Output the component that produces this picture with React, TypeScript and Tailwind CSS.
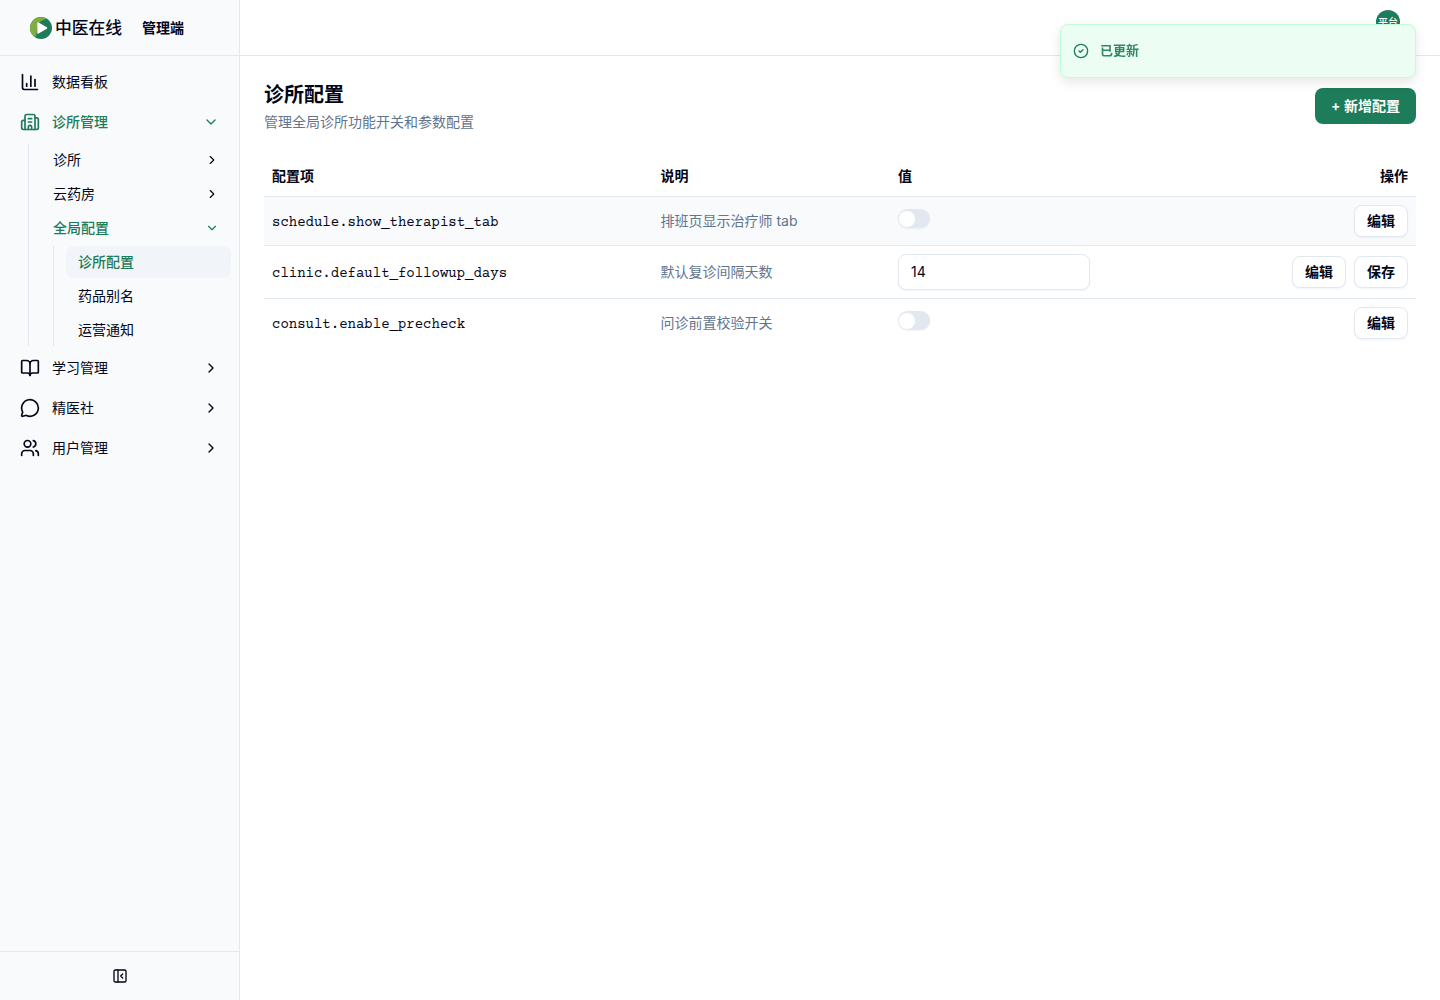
import {
  BookOpen,
  Building2,
  ChartColumn,
  ChevronDown,
  ChevronRight,
  CircleCheck,
  MessageCircle,
  PanelLeftClose,
  Users,
  type LucideIcon,
} from "lucide-react";
import clsx from "clsx";
import { useState } from "react";

interface NavItem {
  label: string;
  icon?: LucideIcon;
  open?: boolean;
  active?: boolean;
  expandable?: boolean;
  children?: NavItem[];
}

const NAV: NavItem[] = [
  { label: "数据看板", icon: ChartColumn },
  {
    label: "诊所管理",
    icon: Building2,
    open: true,
    expandable: true,
    children: [
      { label: "诊所", expandable: true },
      { label: "云药房", expandable: true },
      {
        label: "全局配置",
        open: true,
        expandable: true,
        children: [
          { label: "诊所配置", active: true },
          { label: "药品别名" },
          { label: "运营通知" },
        ],
      },
    ],
  },
  { label: "学习管理", icon: BookOpen, expandable: true },
  { label: "精医社", icon: MessageCircle, expandable: true },
  { label: "用户管理", icon: Users, expandable: true },
];

interface ConfigRow {
  key: string;
  desc: string;
  type: "boolean" | "number";
  value: string;
}

const ROWS: ConfigRow[] = [
  { key: "schedule.show_therapist_tab", desc: "排班页显示治疗师 tab", type: "boolean", value: "false" },
  { key: "clinic.default_followup_days", desc: "默认复诊间隔天数", type: "number", value: "14" },
  { key: "consult.enable_precheck", desc: "问诊前置校验开关", type: "boolean", value: "false" },
];

const Logo = () => (
  <svg viewBox="0 0 24 24" className="size-6 shrink-0">
    <circle cx="12" cy="12" r="11" fill="#1d7c5a" />
    <path d="M12 1A11 11 0 0 0 5.2 20.6C8.5 21.5 7 15 9 9C10.5 4.5 15 4 17.5 2.5A11 11 0 0 0 12 1Z" fill="#80ad43" />
    <path d="M8.3 7.2Q8.3 5.8 9.6 6.4L17.8 11.2Q18.8 12 17.8 12.8L9.6 17.6Q8.3 18.2 8.3 16.8Z" fill="#fff" />
  </svg>
);

const NavNode = ({ item, depth }: { item: NavItem; depth: number }) => {
  const Icon = item.icon;
  const Chevron = item.open ? ChevronDown : ChevronRight;

  return (
    <li>
      <button
        className={clsx(
          "flex w-full items-center rounded-lg px-3 text-left text-sm",
          depth === 0 ? "h-9 gap-3" : "h-8",
          item.active && "bg-slate-100",
          item.open || item.active ? "font-medium text-[#1d7c5a]" : "font-normal"
        )}
      >
        {Icon && <Icon className="size-5 shrink-0" />}
        <span className="flex-1 whitespace-nowrap">{item.label}</span>
        {item.expandable && <Chevron className={depth === 0 ? "size-4" : "size-3.5"} />}
      </button>
      {item.children && (
        <ul
          className={clsx(
            "flex flex-col gap-0.5 border-l border-slate-200 pl-3",
            depth === 0 ? "mt-1 ml-5" : "mt-0.5 ml-3"
          )}
        >
          {item.children.map((child) => (
            <NavNode key={child.label} item={child} depth={depth + 1} />
          ))}
        </ul>
      )}
    </li>
  );
};

const Sidebar = () => (
  <aside className="flex w-60 shrink-0 flex-col border-r border-slate-200 bg-slate-50">
    <div className="flex h-14 shrink-0 items-center border-b border-slate-200 pl-[29px]">
      <Logo />
      <span className="ml-0.5 w-[68px] pt-0.5 text-[16.8px] font-medium whitespace-nowrap">中医在线</span>
      <span className="ml-[19px] text-sm font-semibold">管理端</span>
    </div>
    <nav className="flex-1 p-2">
      <ul className="flex flex-col gap-1">
        {NAV.map((item) => (
          <NavNode key={item.label} item={item} depth={0} />
        ))}
      </ul>
    </nav>
    <div className="flex h-[49px] items-center justify-center border-t border-slate-200">
      <PanelLeftClose className="size-4" />
    </div>
  </aside>
);

const Switch = () => {
  const [on, setOn] = useState(false);

  return (
    <button
      role="switch"
      aria-checked={on}
      onClick={() => setOn(!on)}
      className={clsx(
        "inline-flex h-[18.4px] w-8 items-center rounded-full border border-transparent shadow-xs",
        on ? "bg-[#1d7c5a]" : "bg-slate-200"
      )}
    >
      <span className={clsx("block size-4 rounded-full bg-white", on && "translate-x-3.5")} />
    </button>
  );
};

const OutlineButton = ({ children }: { children: string }) => (
  <button className="h-8 rounded-lg border border-slate-200 bg-white px-3 text-sm font-semibold shadow-xs">
    {children}
  </button>
);

const ConfigTable = () => (
  <table className="mt-6 w-full table-fixed text-sm">
    <colgroup>
      <col className="w-[388.5px]" />
      <col className="w-[237.5px]" />
      <col className="w-[300px]" />
      <col />
    </colgroup>
    <thead>
      <tr className="border-b border-slate-200">
        <th className="h-10 px-2 text-left font-semibold">配置项</th>
        <th className="h-10 px-2 text-left font-semibold">说明</th>
        <th className="h-10 px-2 text-left font-semibold">值</th>
        <th className="h-10 px-2 text-right font-semibold">操作</th>
      </tr>
    </thead>
    <tbody>
      {ROWS.map((row, i) => (
        <tr key={row.key} className={clsx("border-slate-200 not-last:border-b", i === 0 && "bg-slate-50")}>
          <td className="px-2 pt-3 pb-2 font-['Courier_Prime','Courier_10_Pitch','Nimbus_Mono_PS','FreeMono','Courier','Liberation_Mono',monospace]">
            <span className="block leading-4">{row.key}</span>
          </td>
          <td className="p-2 text-slate-500">{row.desc}</td>
          <td className="p-2">
            {row.type === "boolean" ? (
              <Switch />
            ) : (
              <input
                defaultValue={row.value}
                className="block h-9 w-48 rounded-lg border border-slate-200 bg-white px-3 text-sm shadow-xs outline-none"
              />
            )}
          </td>
          <td className="p-2">
            <div className="flex justify-end gap-2">
              <OutlineButton>编辑</OutlineButton>
              {row.type === "number" && <OutlineButton>保存</OutlineButton>}
            </div>
          </td>
        </tr>
      ))}
    </tbody>
  </table>
);

const Toast = ({ message }: { message: string }) => (
  <div className="fixed top-6 right-6 flex h-[54px] w-[356px] items-center gap-[11px] rounded-lg border border-[#bffcd9] bg-[#ecfdf3] px-3 text-[13px] font-semibold text-[#1d7c5a] shadow-[0_4px_12px_rgba(0,0,0,0.1)]">
    <CircleCheck className="size-4" />
    <span className="pb-px opacity-90">{message}</span>
  </div>
);

const App = () => (
  <div className="flex h-screen bg-white font-['Inter','Noto_Sans_CJK_SC',sans-serif] text-slate-950">
    <Sidebar />
    <div className="flex min-w-0 flex-1 flex-col">
      <header className="flex h-14 shrink-0 items-start justify-end border-b border-slate-200 pt-2.5 pr-10">
        <span className="flex size-6 items-center justify-center rounded-full bg-[#1d7c5a] text-[10px] font-medium text-white">
          平台
        </span>
      </header>
      <main className="flex-1 p-6">
        <div className="flex items-center justify-between">
          <div>
            <h1 className="pt-0.5 text-xl leading-[26px] font-semibold">诊所配置</h1>
            <p className="mt-1 text-sm text-slate-500">管理全局诊所功能开关和参数配置</p>
          </div>
          <button className="h-9 w-[101px] rounded-lg bg-[#1d7c5a] text-sm font-semibold whitespace-nowrap text-white">
            + 新增配置
          </button>
        </div>
        <ConfigTable />
      </main>
    </div>
    <Toast message="已更新" />
  </div>
);

export default App;
